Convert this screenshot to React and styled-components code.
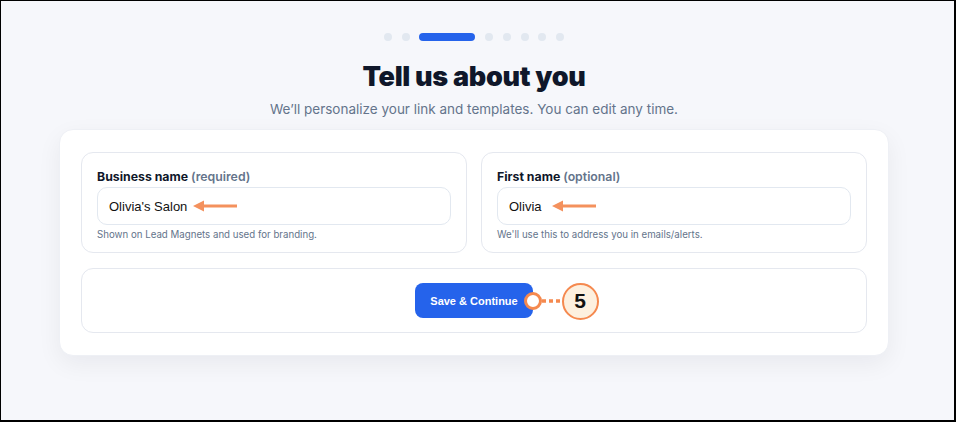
import React from "react";
import styled, { createGlobalStyle } from "styled-components";

const Global = createGlobalStyle`
  html, body { margin: 0; padding: 0; }
  body { font-family: Inter, "Noto Sans", sans-serif; background: #000; }
  * { box-sizing: border-box; }
`;

const Frame = styled.div`
  width: 956px;
  height: 422px;
  border-style: solid;
  border-color: #000;
  border-width: 1px 2px 2px 1px;
  background: #f6f7fb;
  overflow: hidden;
`;

const Column = styled.div`
  width: 830px;
  margin-left: 58px;
  padding-top: 32px;
  display: flex;
  flex-direction: column;
  align-items: center;
`;

const Steps = styled.div`
  display: flex;
  align-items: center;
  gap: 9.7px;
  height: 8px;
`;

const Dot = styled.span`
  display: block;
  height: 8px;
  width: ${(p) => (p.$active ? "56px" : "8px")};
  border-radius: 4px;
  background: ${(p) => (p.$active ? "#2563eb" : "#e2e8f0")};
`;

const Title = styled.h1`
  margin: 20px 0 0;
  font-size: 27px;
  line-height: 32px;
  font-weight: 900;
  color: #0f172a;
  letter-spacing: -0.3px;
`;

const Subtitle = styled.p`
  margin: 6px 0 0;
  font-size: 13.5px;
  line-height: 20px;
  color: #64748b;
`;

const Card = styled.div`
  margin-top: 10px;
  width: 830px;
  background: #fff;
  border: 1px solid #eef0f5;
  border-radius: 14px;
  box-shadow: 0 8px 24px rgba(15, 23, 42, 0.06);
  padding: 22px 21px 22px;
  display: flex;
  flex-direction: column;
  gap: 15px;
`;

const FieldRow = styled.div`
  display: grid;
  grid-template-columns: 1fr 1fr;
  gap: 14px;
`;

const FieldBox = styled.div`
  border: 1px solid #e5e8ef;
  border-radius: 12px;
  padding: 16px 15px 11px;
  display: flex;
  flex-direction: column;
`;

const Label = styled.div`
  font-size: 12.3px;
  line-height: 16px;
  font-weight: 700;
  color: #0f172a;
  margin-bottom: 2px;
`;

const Hint = styled.span`
  color: #64748b;
  font-weight: 600;
`;

const InputBox = styled.div`
  height: 38px;
  border: 1px solid #e2e8f0;
  border-radius: 10px;
  padding: 0 11px;
  display: flex;
  align-items: center;
  gap: ${(p) => p.$gap}px;
  font-family: "Liberation Sans", Arial, sans-serif;
  font-size: 13px;
  color: #111;
`;

const Help = styled.div`
  margin-top: 3px;
  font-size: 9.7px;
  line-height: 13px;
  color: #64748b;
`;

const ActionBox = styled.div`
  height: 65px;
  border: 1px solid #e5e8ef;
  border-radius: 12px;
  display: flex;
  align-items: center;
  justify-content: center;
`;

const ButtonWrap = styled.div`
  position: relative;
  display: inline-flex;
`;

const Button = styled.button`
  height: 35px;
  padding: 0 15px;
  border: none;
  border-radius: 8px;
  background: #2563eb;
  color: #fff;
  font-family: "Liberation Sans", Arial, sans-serif;
  font-weight: 700;
  font-size: 11px;
  cursor: pointer;
`;

const Ring = styled.span`
  position: absolute;
  right: -9px;
  top: 50%;
  margin-top: -9px;
  width: 18px;
  height: 18px;
  border-radius: 50%;
  border: 3px solid #f5894f;
  background: #fff;
`;

const Dots = styled.svg`
  position: absolute;
  left: calc(100% + 9px);
  top: 50%;
  margin-top: -2px;
`;

const Badge = styled.span`
  position: absolute;
  left: calc(100% + 29px);
  top: 50%;
  margin-top: -18px;
  width: 37px;
  height: 37px;
  border-radius: 50%;
  border: 2.5px solid #f5894f;
  background: #fdf0df;
  display: flex;
  align-items: center;
  justify-content: center;
  font-family: "Liberation Sans", Arial, sans-serif;
  font-weight: 700;
  font-size: 21px;
  color: #111;
`;

const Arrow = () => (
  <svg width="44" height="12" viewBox="0 0 44 12">
    <path d="M9 6 H44" stroke="#f4915d" strokeWidth="3" />
    <path d="M0 6 L11 0.5 L11 11.5 Z" fill="#f4915d" />
  </svg>
);

const Field = ({ label, hint, value, help, gap }) => (
  <FieldBox>
    <Label>
      {label} <Hint>({hint})</Hint>
    </Label>
    <InputBox $gap={gap}>
      <span>{value}</span>
      <Arrow />
    </InputBox>
    <Help>{help}</Help>
  </FieldBox>
);

export default function App() {
  const steps = [0, 1, 2, 3, 4, 5, 6, 7];
  return (
    <>
      <Global />
      <Frame>
        <Column>
          <Steps>
            {steps.map((s) => (
              <Dot key={s} $active={s === 2} />
            ))}
          </Steps>
          <Title>Tell us about you</Title>
          <Subtitle>We’ll personalize your link and templates. You can edit any time.</Subtitle>
          <Card>
            <FieldRow>
              <Field
                label="Business name"
                hint="required"
                value="Olivia's Salon"
                help="Shown on Lead Magnets and used for branding."
                gap={6}
              />
              <Field
                label="First name"
                hint="optional"
                value="Olivia"
                help="We'll use this to address you in emails/alerts."
                gap={10}
              />
            </FieldRow>
            <ActionBox>
              <ButtonWrap>
                <Button>Save &amp; Continue</Button>
                <Ring />
                <Dots width="20" height="4" viewBox="0 0 20 4">
                  <path d="M0 2 H20" stroke="#f5894f" strokeWidth="3.5" strokeDasharray="4 3" />
                </Dots>
                <Badge>5</Badge>
              </ButtonWrap>
            </ActionBox>
          </Card>
        </Column>
      </Frame>
    </>
  );
}
